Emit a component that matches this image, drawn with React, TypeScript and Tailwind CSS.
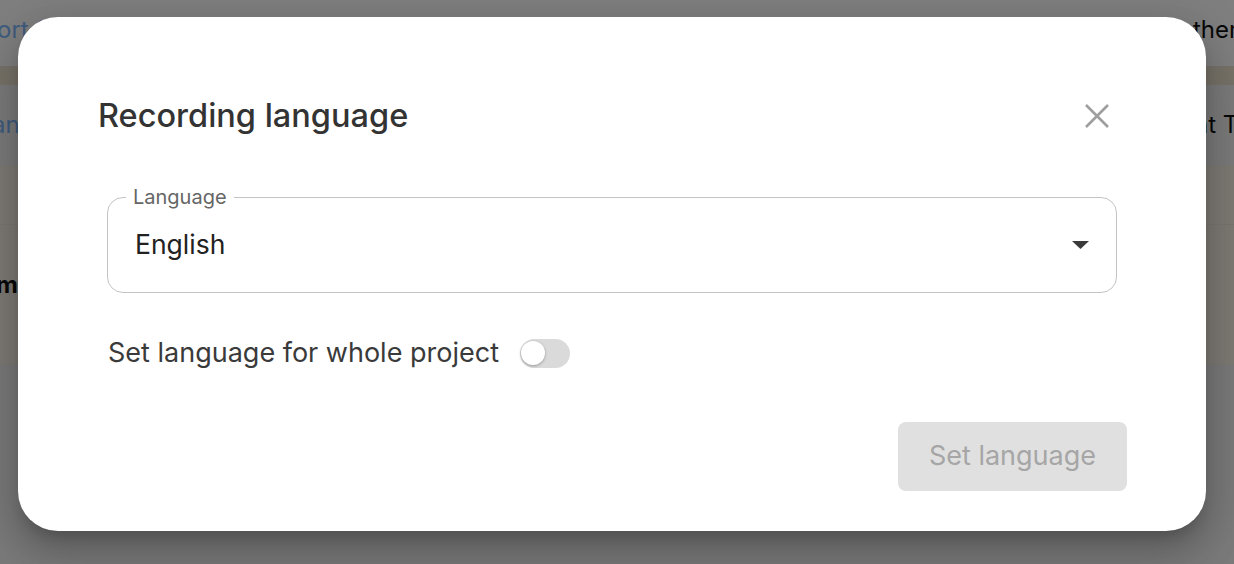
export default function App() {
  return (
    <div
      className="relative h-[564px] w-[1234px] overflow-hidden bg-white"
      style={{ fontFamily: "Inter, 'Noto Sans', sans-serif" }}
    >
      {/* page behind the overlay */}
      <div className="flex h-full flex-col text-[24px]">
        <div className="flex h-[66px] items-start pt-[12px]">
          <span className="-ml-[3px] whitespace-nowrap text-[#7fb8ff]">ort Settings</span>
          <span className="ml-auto w-[41px] shrink-0 overflow-hidden whitespace-nowrap text-[#111]">ther</span>
        </div>
        <div className="h-[19px] bg-[#eee6d2]" />
        <div className="flex h-[80px] items-center bg-[#f7f7f7]">
          <span className="-ml-[8px] whitespace-nowrap text-[#7fb8ff]">an</span>
          <span className="ml-auto w-[40px] shrink-0 overflow-hidden whitespace-nowrap text-[#111]">ht Text</span>
        </div>
        <div className="h-[60px] border-b border-[#f3ece0] bg-[#fdf5e8]" />
        <div className="flex h-[140px] items-center bg-[#fdf5e8] pb-[20px]">
          <span className="-ml-[4px] whitespace-nowrap font-bold text-[#111]">me</span>
        </div>
        <div className="flex-1 bg-[#f5f5f5]" />
      </div>

      {/* overlay */}
      <div className="absolute inset-0 bg-black/50">
        <div className="ml-[18px] mt-[17px] flex h-[514px] w-[1188px] flex-col rounded-[40px] bg-white px-[80px] pb-[40px] pt-[75px] shadow-[0_11px_15px_-7px_rgba(0,0,0,0.2),0_24px_38px_3px_rgba(0,0,0,0.14),0_9px_46px_8px_rgba(0,0,0,0.12)]">
          <div className="flex h-[48px] items-center justify-between">
            <h2 className="text-[32.5px] font-medium leading-none text-[#333333]">Recording language</h2>
            <button className="mr-[17px] flex h-[24px] w-[24px] items-center justify-center">
              <svg width="24" height="24" viewBox="0 0 24 24" fill="none">
                <path d="M1 1L23 23M23 1L1 23" stroke="#9e9e9e" strokeWidth="2.6" />
              </svg>
            </button>
          </div>

          <div className="relative mx-[9px] mt-[57px] flex h-[96px] items-center rounded-[16px] border border-[#c4c4c4] px-[27px]">
            <span className="absolute -top-[13px] left-[18px] bg-white px-[7px] text-[20px] leading-[24px] text-[#666666]">
              Language
            </span>
            <span className="text-[26.5px] text-[#222222]">English</span>
            <svg className="ml-auto" width="17" height="8" viewBox="0 0 17 8">
              <path d="M0 0H17L8.5 8Z" fill="#3a3a3a" />
            </svg>
          </div>

          <div className="ml-[10px] mt-[40px] flex h-[40px] items-center gap-[21px]">
            <span className="text-[27px] text-[#3a3a3a]">Set language for whole project</span>
            <div className="flex h-[29px] w-[50px] items-center rounded-full bg-[#dadada] px-[1px]">
              <div className="h-[24px] w-[24px] rounded-full bg-white shadow-[0_1px_3px_rgba(0,0,0,0.3)]" />
            </div>
          </div>

          <div className="-mr-[1px] mt-[49px] flex justify-end">
            <button className="flex h-[69px] w-[229px] items-center justify-center rounded-[8px] bg-[#e0e0e0] text-[27px] text-[#a6a6a6]">
              Set language
            </button>
          </div>
        </div>
      </div>
    </div>
  );
}
